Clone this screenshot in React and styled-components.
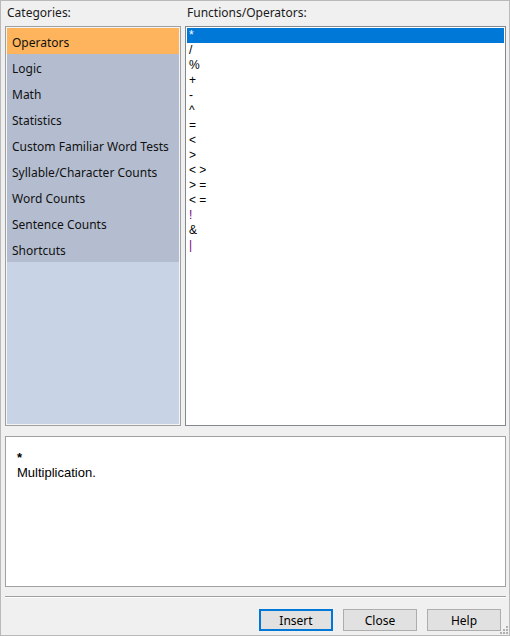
import React, { useState } from "react";
import styled, { createGlobalStyle } from "styled-components";

const GlobalStyle = createGlobalStyle`
  html, body {
    margin: 0;
    padding: 0;
    background: #f0f0f0;
  }
  * {
    box-sizing: border-box;
  }
`;

const Frame = styled.div`
  position: relative;
  width: 510px;
  height: 636px;
  border: 1px solid #b9b9b9;
  background: #f0f0f0;
  padding: 4px 3px 0 4px;
  display: flex;
  flex-direction: column;
  font-family: "Segoe UI", "Noto Sans", sans-serif;
  font-size: 12px;
  color: #000;
`;

const TopGrid = styled.div`
  display: grid;
  grid-template-columns: 176px 321px;
  column-gap: 4px;
`;

const Column = styled.div`
  display: flex;
  flex-direction: column;
`;

const Label = styled.div`
  height: 16px;
  line-height: 16px;
  margin-bottom: 5px;
  padding-left: 2px;
  color: #1a1a1a;
`;

const ListBox = styled.div`
  height: 400px;
  border: 1px solid ${(p) => p.$border};
  padding: 1px;
  background: ${(p) => p.$pad};
  display: flex;
  flex-direction: column;
  overflow: hidden;
`;

const CategoryList = styled.div`
  flex: 1;
  background: #c8d3e6;
  display: flex;
  flex-direction: column;
`;

const Category = styled.div`
  height: 26px;
  padding: 4px 0 0 5px;
  line-height: 22px;
  background: ${(p) => (p.$active ? "#fdb45c" : "#b4bdd0")};
  color: #111;
  white-space: nowrap;
  cursor: default;
`;

const OpRow = styled.div`
  height: 15px;
  line-height: 15px;
  padding-left: 2px;
  font-family: "Liberation Sans", Arial, sans-serif;
  font-size: 12px;
  background: ${(p) => (p.$selected ? "#0078d7" : "transparent")};
  color: ${(p) => (p.$selected ? "#fff" : p.$color)};
  cursor: default;
`;

const Description = styled.div`
  margin-top: 10px;
  height: 151px;
  border: 1px solid #a0a0a0;
  background: #fff;
  padding: 13px 11px;
  font-family: "Liberation Sans", Arial, sans-serif;
  font-size: 13px;
  line-height: 15px;
`;

const Symbol = styled.div`
  font-weight: bold;
`;

const Separator = styled.div`
  margin-top: 9px;
  height: 2px;
  border-top: 1px solid #a0a0a0;
  border-bottom: 1px solid #fff;
`;

const ButtonRow = styled.div`
  margin-top: 11px;
  display: flex;
  justify-content: flex-end;
  gap: 10px;
  padding-right: 5px;
`;

const Button = styled.button`
  width: 74px;
  height: 22px;
  background: #e1e1e1;
  border: 1px solid ${(p) => (p.$default ? "#0078d7" : "#adadad")};
  box-shadow: ${(p) => (p.$default ? "inset 0 0 0 1px #0078d7" : "none")};
  font-family: inherit;
  font-size: 12px;
  color: #000;
  padding: 0;
`;

const Grip = styled.svg`
  position: absolute;
  right: 1px;
  bottom: 1px;
`;

const categories = [
  "Operators",
  "Logic",
  "Math",
  "Statistics",
  "Custom Familiar Word Tests",
  "Syllable/Character Counts",
  "Word Counts",
  "Sentence Counts",
  "Shortcuts",
];

const operators = [
  { s: "*", d: "Multiplication." },
  { s: "/" },
  { s: "%" },
  { s: "+" },
  { s: "-" },
  { s: "^" },
  { s: "=" },
  { s: "<" },
  { s: ">" },
  { s: "< >" },
  { s: "> =" },
  { s: "< =" },
  { s: "!", c: "#800080" },
  { s: "&" },
  { s: "|", c: "#800080" },
];

const App = () => {
  const [cat, setCat] = useState(0);
  const [op, setOp] = useState(0);

  return (
    <>
      <GlobalStyle />
      <Frame>
        <TopGrid>
          <Column>
            <Label>Categories:</Label>
            <ListBox $border="#a0a0a0" $pad="#f4f4f4">
              <CategoryList>
                {categories.map((c, i) => (
                  <Category key={c} $active={i === cat} onClick={() => setCat(i)}>
                    {c}
                  </Category>
                ))}
              </CategoryList>
            </ListBox>
          </Column>
          <Column>
            <Label>Functions/Operators:</Label>
            <ListBox $border="#828790" $pad="#fff">
              {operators.map((o, i) => (
                <OpRow
                  key={o.s}
                  $selected={i === op}
                  $color={o.c || "#000"}
                  onClick={() => setOp(i)}
                >
                  {o.s}
                </OpRow>
              ))}
            </ListBox>
          </Column>
        </TopGrid>

        <Description>
          <Symbol>{operators[op].s}</Symbol>
          <div>{operators[op].d || ""}</div>
        </Description>

        <Separator />

        <ButtonRow>
          <Button $default>Insert</Button>
          <Button>Close</Button>
          <Button>Help</Button>
        </ButtonRow>

        <Grip width="10" height="10" viewBox="0 0 10 10">
          <g fill="#b0b0b0">
            <rect x="8" y="2" width="2" height="2" />
            <rect x="5" y="5" width="2" height="2" />
            <rect x="8" y="5" width="2" height="2" />
            <rect x="2" y="8" width="2" height="2" />
            <rect x="5" y="8" width="2" height="2" />
            <rect x="8" y="8" width="2" height="2" />
          </g>
        </Grip>
      </Frame>
    </>
  );
};

export default App;
